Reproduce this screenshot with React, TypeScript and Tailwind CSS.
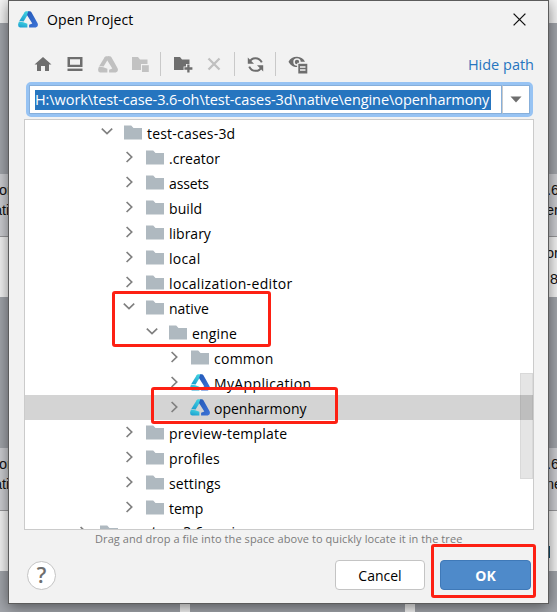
import React from "react";

type Kind = "folder" | "project";
interface Row {
  name: string;
  level: number;
  open?: boolean;
  kind?: Kind;
  selected?: boolean;
  tracking?: string;
}

const rows: Row[] = [
  { name: "test-cases-3d", level: 1, open: true, tracking: "tracking-[0.2px]" },
  { name: ".creator", level: 2 },
  { name: "assets", level: 2, tracking: "tracking-[-0.15px]" },
  { name: "build", level: 2, tracking: "tracking-[0.1px]" },
  { name: "library", level: 2 },
  { name: "local", level: 2, tracking: "tracking-[0.3px]" },
  { name: "localization-editor", level: 2, tracking: "tracking-[0.35px]" },
  { name: "native", level: 2, open: true },
  { name: "engine", level: 3, open: true, tracking: "tracking-[0.15px]" },
  { name: "common", level: 4, tracking: "tracking-[0.25px]" },
  { name: "MyApplication", level: 4, kind: "project", tracking: "tracking-[0.37px]" },
  { name: "openharmony", level: 4, kind: "project", selected: true },
  { name: "preview-template", level: 2, tracking: "tracking-[0.25px]" },
  { name: "profiles", level: 2, tracking: "tracking-[0.25px]" },
  { name: "settings", level: 2, tracking: "tracking-[0.1px]" },
  { name: "temp", level: 2 },
  { name: "creators-3.6-proj", level: 0, tracking: "-mt-[4px] tracking-[0.2px]" },
];

const indents = ["pl-[52px]", "pl-[76px]", "pl-[98px]", "pl-[121px]", "pl-[143px]"];

function Logo({ gray = false, className = "" }: { gray?: boolean; className?: string }) {
  const id = React.useId();
  return (
    <svg className={className} width="20" height="17" viewBox="0 0 20 17">
      <defs>
        <linearGradient id={id + "a"} x1="0.7" y1="0" x2="0.3" y2="1">
          <stop offset="0" stopColor={gray ? "#c0c0c0" : "#43d3e0"} />
          <stop offset="1" stopColor={gray ? "#c0c0c0" : "#1c9fd0"} />
        </linearGradient>
        <linearGradient id={id + "b"} x1="0" y1="0" x2="1" y2="1">
          <stop offset="0" stopColor={gray ? "#c0c0c0" : "#2459b8"} />
          <stop offset="1" stopColor={gray ? "#c0c0c0" : "#3d74d8"} />
        </linearGradient>
      </defs>
      <path d="M8.200 0.300h3l-.9 2.400-4.700 7.900-4.300-.7L6.600 1.200Q7.200 0.300 8.200 0.300z" fill={`url(#${id}a)`} />
      <path d="M1 10.500l4.400 0.700 4 1.500v3.800H2Q-0.300 16 0.200 13z" fill={`url(#${id}a)`} />
      <path
        d="M10.300 0.300h1.400q1.200 0 1.900 1.100l6 10.800q1.200 3.500-1.800 4.300h-6.700v-2.800l3.200-1.300L9 4z"
        fill={`url(#${id}b)`}
      />
    </svg>
  );
}

function Folder() {
  return (
    <svg width="18" height="15" viewBox="0 0 18 15">
      <path d="M0 .5h7.2L9.5 3H18v11.5H0z" fill="#afb9c0" />
    </svg>
  );
}

function Chevron({ open }: { open?: boolean }) {
  return (
    <svg width="12" height="12" viewBox="0 0 12 12" fill="none" stroke="#7f7f7f" strokeWidth="1.7">
      {open ? <path d="M.800 2.700L6 7.600l5.200-4.900" /> : <path d="M3.6 1L8.7 6l-5.1 5" />}
    </svg>
  );
}

function TreeRow({ row }: { row: Row }) {
  return (
    <div
      className={`flex h-[25px] shrink-0 items-center ${indents[row.level]} ${row.selected ? "bg-[#d4d4d4]" : ""}`}
    >
      <span className="flex h-[25px] w-[23px] shrink-0 pt-[6px]">
        <Chevron open={row.open} />
      </span>
      {row.kind === "project" ? (
        <span className="-ml-px flex w-[24px] shrink-0 pb-[1px]">
          <Logo />
        </span>
      ) : (
        <span className="flex w-[23px] shrink-0 pb-[1px]">
          <Folder />
        </span>
      )}
      <span className={`whitespace-pre pt-[2px] text-[14px] leading-[20px] text-black ${row.tracking ?? ""}`}>
        {row.name}
      </span>
    </div>
  );
}

function Card({ top, side }: { top?: boolean; side: "left" | "mid" | "right" }) {
  return (
    <>
      <div className="h-[151px] bg-[#a3a6ac]" />
      <div className="h-[63px] border-b border-[#9a9a9c] bg-[#cfd0d4] pt-[6px] text-[14.5px] leading-[20px] text-[#111]">
        {side === "left" && (
          <div className="w-[12px] overflow-hidden">
            <div className="-ml-px">or</div>
            <div className="-ml-[6px]">ati</div>
          </div>
        )}
        {side === "right" && (
          <div className="ml-[132px] w-[12px] overflow-hidden">
            <div>.6</div>
            <div className="-ml-[1px]">{top ? "er" : "ne"}</div>
          </div>
        )}
      </div>
      <div className="h-[60px] bg-[#f6f6f6] text-[14.5px] text-[#111]">
        {side === "right" && top && (
          <div className="ml-[131px] w-[12px] overflow-hidden pt-[3px] leading-[26px]">
            <div>or</div>
            <div className="pl-[4px]">8</div>
          </div>
        )}
        {side === "right" && !top && <div className="ml-[128px] h-[47px] w-[7px] border-b-[12px] border-[#14506f]" />}
      </div>
    </>
  );
}

function Backdrop() {
  return (
    <div className="grid h-[612px] w-[557px] grid-cols-[180px_215px_142px] gap-x-[10px] overflow-hidden bg-[#f6f6f6] font-['Liberation_Sans',sans-serif]">
      {(["left", "mid", "right"] as const).map((side) => (
        <div key={side} className="pt-[23px]">
          <Card side={side} top />
          <Card side={side} />
          <div className="h-[50px] bg-[#a3a6ac]" />
        </div>
      ))}
    </div>
  );
}

function Toolbar() {
  const sep = <span className="h-6 w-px bg-[#c9c9c9]" />;
  return (
    <div className="mt-[13px] flex h-6 items-center">
      <svg className="ml-[25px]" width="18" height="16" viewBox="0 0 18 16">
        <path d="M9 1l8.5 7.5H15V15h-4v-5H7v5H3V8.5H.5z" fill="#6e6e6e" />
      </svg>
      <svg className="ml-[15px]" width="16" height="16" viewBox="0 0 16 16">
        <path d="M.5 1h15v10H.5zM3 3.3v5.4h10V3.3z" fillRule="evenodd" fill="#6e6e6e" />
        <path d="M.5 12.6h15V15H.5z" fill="#6e6e6e" />
      </svg>
      <Logo gray className="ml-[15px]" />
      <svg className="ml-[14px] mt-[2px]" width="18" height="16" viewBox="0 0 18 16">
        <path d="M0 0h6l2 2.5h7.5V7H9v6H0z" fill="#c2c2c2" />
        <path d="M10 8.2h6.8V15H10z" fill="#c2c2c2" />
      </svg>
      <span className="w-[10px]" />
      {sep}
      <svg className="ml-[13px] mt-[1px]" width="19" height="16" viewBox="0 0 19 16">
        <path d="M0 0h6l2 2.5h7.5V7H12v2.4H9.6V13H0z" fill="#6e6e6e" />
        <path d="M14.4 7.5v8M10.4 11.5h8" stroke="#6e6e6e" strokeWidth="2.3" />
      </svg>
      <svg className="ml-[14px]" width="14" height="14" viewBox="0 0 14 14">
        <path d="M1.5 1.5l11 11M12.5 1.5l-11 11" stroke="#c0c0c0" strokeWidth="2.3" />
      </svg>
      <span className="w-[13px]" />
      {sep}
      <svg className="ml-[12px]" width="17" height="17" viewBox="0 0 17 17" fill="none" stroke="#6e6e6e" strokeWidth="2">
        <path d="M2.4 6.2C4.4 1 12 .5 14.8 6.4M14.6 10.8C12.6 16 5 16.500 2.200 10.600" />
        <path d="M.8 1.500v6.200h6.200zM16.200 15.500V9.300H10z" fill="#6e6e6e" stroke="none" />
      </svg>
      <span className="w-[11px]" />
      {sep}
      <svg className="ml-[12px] mt-[1px]" width="20" height="18" viewBox="0 0 20 18">
        <path d="M9 .8c4 0 6.700 2.300 8 5H9.300v5.300C5 11.200 2 8.600.5 5.700 2.300 2.500 5 .8 9 .8z" fill="#6e6e6e" />
        <circle cx="9" cy="6" r="3.700" fill="#f2f2f2" />
        <circle cx="9" cy="6" r="2.200" fill="#6e6e6e" />
        <path d="M9.300 6.800H20V18H9.300z" fill="#f2f2f2" />
        <path d="M10.300 7.800h9V17.500h-9z" fill="#6e6e6e" />
        <path d="M12 11h5.500M12 14h5.500" stroke="#f2f2f2" strokeWidth="1.300" />
      </svg>
      <span className="ml-auto mr-[14px] pt-[2px] text-[14.5px] leading-5 text-[#2675bf]">Hide path</span>
    </div>
  );
}

function Dialog() {
  return (
    <div className="absolute left-[8px] top-0 flex h-[604px] w-[541px] flex-col border border-[#5c5c5c] bg-[#f2f2f2] shadow-[0_3px_14px_rgba(0,0,0,0.5)]">
      <div className="flex h-[38px] items-center pl-[9px] pr-[22px] text-black">
        <Logo className="-mt-[2px]" />
        <span className="ml-[9px] text-[14px] leading-5 tracking-[0.1px]">Open Project</span>
        <svg className="-mt-[2px] ml-auto" width="13" height="13" viewBox="0 0 13 13">
          <path d="M.6.6l11.800 11.800M12.400.6L.6 12.400" stroke="#111" strokeWidth="1.300" />
        </svg>
      </div>
      <Toolbar />
      <div className="ml-[17px] mt-[6px] flex h-[35px] w-[507px] shrink-0 items-stretch rounded-[5px] border-[3px] border-[#97c3f3] bg-white">
        <div className="flex flex-1 items-center border border-[#87afda] pl-[5px]">
          <span className="h-[20px] w-[456px] whitespace-pre bg-[#2675bf] text-[14.5px] leading-[20px] tracking-[-0.07px] text-white">
            H:\work\test-case-3.6-oh\test-cases-3d\native\engine\openharmony
          </span>
        </div>
        <div className="flex w-[28px] items-center justify-center border border-[#87afda] border-l-[#cbcbcb]">
          <svg width="12" height="7" viewBox="0 0 12 7">
            <path d="M.5.500h11L6 6.500z" fill="#6e6e6e" />
          </svg>
        </div>
      </div>
      <div className="relative ml-[15px] mt-[2px] flex h-[411px] w-[510px] shrink-0 flex-col overflow-hidden border border-[#cbcbcb] bg-white">
        {rows.map((r) => (
          <TreeRow key={r.name} row={r} />
        ))}
        <span className="absolute right-0 top-[253px] h-[106px] w-[13px] border border-black/5 bg-black/10" />
      </div>
      <p className="ml-[86px] mt-[1px] whitespace-pre text-[11px] leading-[15px] tracking-[0.08px] text-[#7b7b7b]">
        Drag and drop a file into the space above to quickly locate it in the tree
      </p>
      <div className="mt-[14px] flex items-center">
        <span className="ml-[18px] flex size-[29px] items-center justify-center rounded-full border border-[#c4c4c4] bg-white text-[21px] font-semibold leading-none text-[#6e6e6e]">
          ?
        </span>
        <button className="ml-[279px] h-[30px] w-[90px] rounded-[4px] border border-[#c4c4c4] bg-white text-[14px] text-black">
          Cancel
        </button>
        <button className="ml-[15px] h-[30px] w-[91px] rounded-[4px] border border-[#3f79b8] bg-[#4e8aca] text-[14px] font-bold text-white">
          OK
        </button>
      </div>
    </div>
  );
}

export default function App() {
  return (
    <main className="relative h-[612px] w-[557px] overflow-hidden font-['Open_Sans','Noto_Sans',sans-serif]">
      <Backdrop />
      <Dialog />
      <div className="absolute left-[112px] top-[291px] h-[56px] w-[159px] rounded-[3px] border-[3px] border-[#fd2013]" />
      <div className="absolute left-[151px] top-[387px] h-[37px] w-[187px] rounded-[3px] border-[3px] border-[#fd2013]" />
      <div className="absolute left-[431px] top-[544px] h-[54px] w-[105px] rounded-[3px] border-[3px] border-[#fd2013]" />
    </main>
  );
}
